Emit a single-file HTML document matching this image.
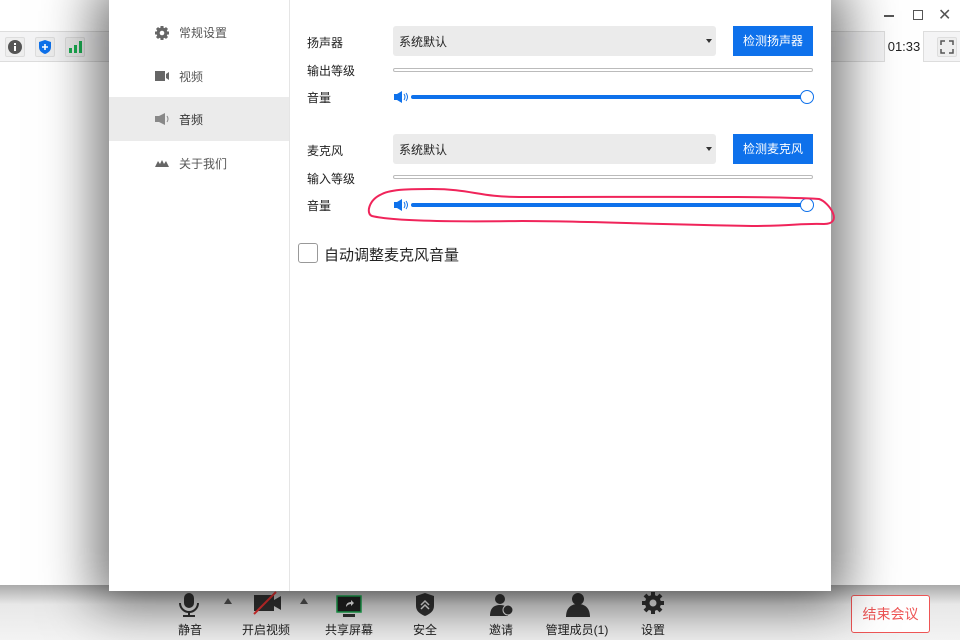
<!DOCTYPE html><html><head><meta charset="utf-8"><style>
*{margin:0;padding:0;box-sizing:border-box}
body{width:960px;height:640px;overflow:hidden;background:#fff;font-family:"Liberation Sans","Noto Sans CJK SC",sans-serif;position:relative;font-size:13px;color:#222}
.topbar{position:absolute;left:0;top:31px;width:960px;height:31px;background:#f4f4f5;border-top:1px solid #ddd;border-bottom:1px solid #ddd}
.ib{position:absolute;top:37px;width:20px;height:20px;border:1px solid #ddd;border-radius:2px;background:#eee}
.bottom{position:absolute;left:0;top:585px;width:960px;height:55px;background:linear-gradient(#aaa,#e8e8e8 35%,#f3f3f3)}
.tool{position:absolute;top:621px;font-size:12px;color:#222;transform:translateX(-50%);white-space:nowrap}
.modal{position:absolute;left:109px;top:0;width:722px;height:591px;background:#fff;box-shadow:0 0 50px 14px rgba(0,0,0,0.55)}
.side{position:absolute;left:0;top:0;width:181px;height:591px;border-right:1px solid #e5e5e5}
.si{position:absolute;left:0;width:180px;height:44px;font-size:12px;color:#555}
.si span{position:absolute;left:70px;top:14px}
.si svg{position:absolute;left:45px;top:15px}
.lab{position:absolute;left:307px;font-size:12px;color:#222}
.sel{position:absolute;left:393px;width:323px;height:30px;background:#ebebeb;border-radius:3px;font-size:12px;padding:7px 0 0 6px}
.sel:after{content:"";position:absolute;right:4px;top:13px;border:3px solid transparent;border-top:4px solid #333}
.btn{position:absolute;left:733px;width:80px;height:30px;background:#0e71eb;color:#fff;font-size:12px;text-align:center;line-height:30px}
.lvl{position:absolute;left:393px;width:420px;height:4px;border:1px solid #bbb;border-radius:2px}
.vol{position:absolute;left:393px;width:420px;height:14px}
.vol .bar{position:absolute;left:18px;top:5px;width:397px;height:4px;background:#0e71eb;border-radius:2px}
.vol .knob{position:absolute;left:407px;top:0;width:14px;height:14px;border:1px solid #0e71eb;border-radius:50%;background:#fff}
</style></head><body>
<div class="topbar"></div>
<div class="ib" style="left:5px"><svg width="18" height="18"><circle cx="9" cy="9" r="7" fill="#555"/><rect x="8" y="8" width="2" height="5" fill="#fff"/><rect x="8" y="5" width="2" height="2" fill="#fff"/></svg></div>
<div class="ib" style="left:35px"><svg width="18" height="18"><path d="M9 2l6 2v5c0 4-3 6-6 7-3-1-6-3-6-7V4z" fill="#0e71eb"/><path d="M9 6v6M6 9h6" stroke="#fff" stroke-width="1.6"/></svg></div>
<div class="ib" style="left:65px"><svg width="18" height="18"><rect x="3" y="10" width="3" height="5" fill="#1bb053"/><rect x="8" y="7" width="3" height="8" fill="#1bb053"/><rect x="13" y="3" width="3" height="12" fill="#1bb053"/></svg></div>
<div style="position:absolute;left:884px;top:31px;width:40px;height:31px;background:#fff;border-left:1px solid #ddd;border-right:1px solid #ddd;font-size:13px;text-align:center;line-height:31px">01:33</div>
<div class="ib" style="left:937px;background:#eee"><svg width="18" height="18" fill="none" stroke="#555" stroke-width="1.5"><path d="M3 7V3h4M11 3h4v4M15 11v4h-4M7 15H3v-4"/></svg></div>
<div style="position:absolute;left:884px;top:15px;width:10px;height:1.5px;background:#555"></div>
<div style="position:absolute;left:913px;top:10px;width:10px;height:10px;border:1.5px solid #555"></div>
<div style="position:absolute;left:938px;top:5px;font-size:16px;color:#555">✕</div>
<div class="bottom"></div>
<svg style="position:absolute;left:0;top:590px" width="960" height="30">
<g fill="#333"><rect x="184" y="3" width="10" height="15" rx="5"/><path d="M180 13a9 9 0 0 0 18 0" stroke="#333" stroke-width="2" fill="none"/><rect x="188" y="21" width="2" height="5"/><rect x="183" y="25" width="12" height="2"/>
<path d="M224 14l4-6 4 6z" fill="#555"/><rect x="254" y="5" width="20" height="16"/><path d="M274 10l7-4v14l-7-4z"/><path d="M254 24l22-22" stroke="#e33" stroke-width="2"/><path d="M300 14l4-6 4 6z" fill="#555"/>
<rect x="337" y="6" width="24" height="16" fill="#222" stroke="#1bb053" stroke-width="1.5"/><rect x="343" y="24" width="12" height="3"/><path d="M346 17q0-5 5-5v-2l3 3-3 3v-2q-3 0-5 3z" fill="#fff"/>
<path d="M425 3l9 3v10c0 5-4 8-9 10-5-2-9-5-9-10V6z"/><path d="M421 15l4-4 4 4M421 19l4-4 4 4" stroke="#eee" fill="none" stroke-width="1.5"/>
<circle cx="500" cy="9" r="5"/><path d="M490 26c0-8 4-11 10-11s8 3 8 7v4z"/><circle cx="508" cy="20" r="5" fill="#333" stroke="#eee"/>
<circle cx="578" cy="9" r="6"/><path d="M566 27c0-9 5-13 12-13s12 4 12 13z"/>
<circle cx="653" cy="13" r="8"/><path d="M653 2v22M642 13h22M645 5l16 16M661 5L645 21" stroke="#333" stroke-width="4"/><circle cx="653" cy="13" r="3.5" fill="#eee"/></g></svg>
<div class="tool" style="left:190px">静音</div><div class="tool" style="left:266px">开启视频</div><div class="tool" style="left:349px">共享屏幕</div><div class="tool" style="left:425px">安全</div><div class="tool" style="left:501px">邀请</div><div class="tool" style="left:577px">管理成员(1)</div><div class="tool" style="left:653px">设置</div>
<div style="position:absolute;left:851px;top:595px;width:79px;height:38px;border:1px solid #e55;border-radius:3px;background:#fff;color:#e55;font-size:14px;text-align:center;line-height:36px">结束会议</div>
<div class="modal">
<div class="side">
<div class="si" style="top:10px"><svg width="16" height="16"><g fill="#666"><circle cx="8" cy="8" r="5.5"/><path d="M8 1v14M1 8h14M3 3l10 10M13 3L3 13" stroke="#666" stroke-width="3"/></g><circle cx="8" cy="8" r="2.3" fill="#fff"/></svg><span>常规设置</span></div>
<div class="si" style="top:54px"><svg width="16" height="14"><rect x="1" y="2" width="10" height="10" fill="#666"/><path d="M12 5l3-2v8l-3-2z" fill="#666"/></svg><span>视频</span></div>
<div class="si" style="top:97px;background:#ebebeb"><svg width="16" height="14"><path d="M1 4h4l6-3v12l-6-3H1z" fill="#888"/><path d="M13 4q2 3 0 6" stroke="#888" fill="none"/></svg><span style="color:#333">音频</span></div>
<div class="si" style="top:141px"><svg width="16" height="14"><path d="M1 11l3-6 2 3 2-4 2 4 2-3 3 6z" fill="#666"/></svg><span>关于我们</span></div>
</div>
</div>
<div class="lab" style="top:34px">扬声器</div><div class="sel" style="top:26px">系统默认</div><div class="btn" style="top:26px">检测扬声器</div>
<div class="lab" style="top:62px">输出等级</div><div class="lvl" style="top:68px"></div>
<div class="lab" style="top:89px">音量</div><div class="vol" style="top:90px"><svg width="16" height="14" style="position:absolute;left:0;top:0"><path d="M1 4h3l5-3v12l-5-3H1z" fill="#0e71eb"/><path d="M11 4q2 3 0 6M13 3q3 4 0 8" stroke="#0e71eb" fill="none"/></svg><div class="bar"></div><div class="knob"></div></div>
<div class="lab" style="top:142px">麦克风</div><div class="sel" style="top:134px">系统默认</div><div class="btn" style="top:134px">检测麦克风</div>
<div class="lab" style="top:170px">输入等级</div><div class="lvl" style="top:175px"></div>
<div class="lab" style="top:197px">音量</div><div class="vol" style="top:198px"><svg width="16" height="14" style="position:absolute;left:0;top:0"><path d="M1 4h3l5-3v12l-5-3H1z" fill="#0e71eb"/><path d="M11 4q2 3 0 6M13 3q3 4 0 8" stroke="#0e71eb" fill="none"/></svg><div class="bar"></div><div class="knob"></div></div>
<svg style="position:absolute;left:360px;top:182px" width="480" height="50"><path d="M72 7c-20 0-40 0-50 5-14 6-16 20-10 22 20 5 80 6 150 5 60 0 120 3 230 5 40 0 50-3 72-2 20 0 5-22-5-25-50-3-150-2-300-2C120 15 110 7 72 7z" fill="none" stroke="#f0245a" stroke-width="2"/></svg>
<div style="position:absolute;left:298px;top:243px;width:20px;height:20px;border:1px solid #999;border-radius:3px;background:#fff"></div>
<div style="position:absolute;left:324px;top:244px;font-size:15px;color:#222">自动调整麦克风音量</div>
</body></html>
